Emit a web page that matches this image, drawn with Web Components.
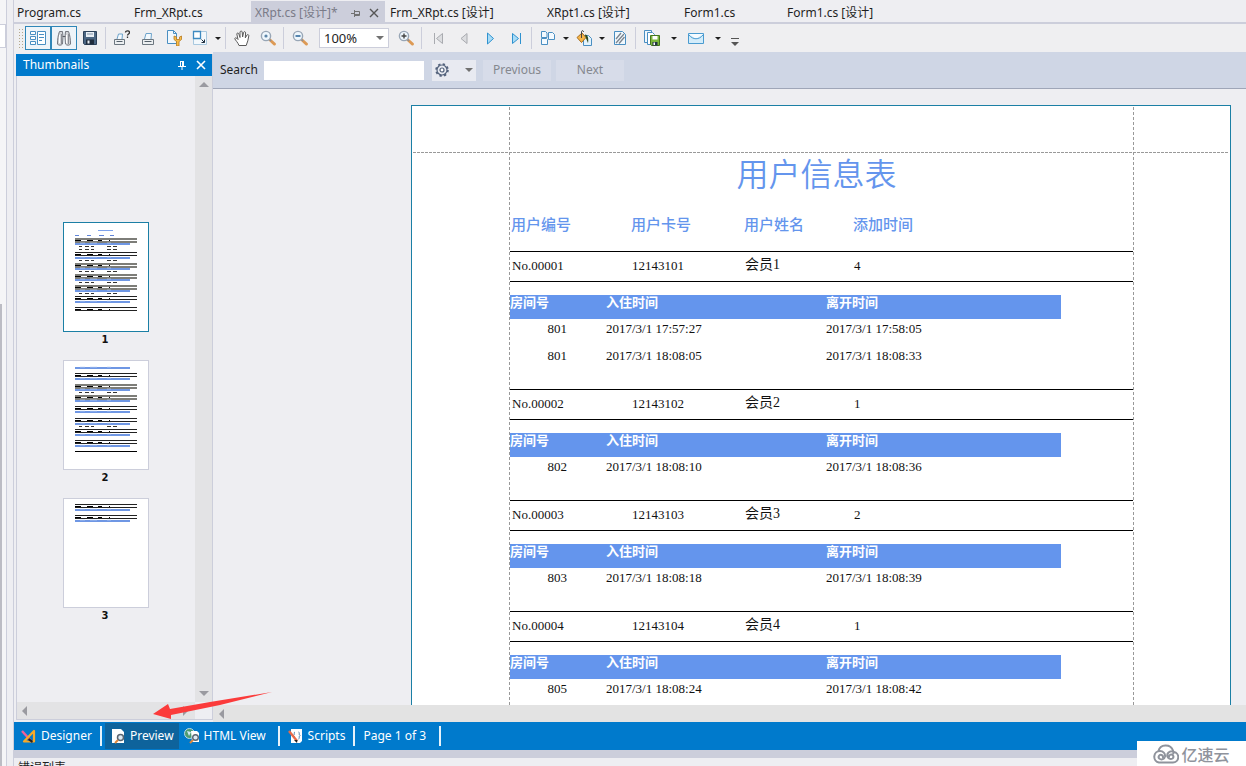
<!DOCTYPE html>
<html lang="zh-CN">
<head>
<meta charset="utf-8">
<title>XRpt.cs - Preview</title>
<style>
html, body { margin: 0; height: 100%; }
body { font: 12px/16px "Noto Sans", "Noto Sans CJK SC", sans-serif; color: #1e1e1e; background: #eeeef2; overflow: hidden; }
</style>
</head>
<body>
<ide-shell>
  <doc-tabs slot="tabs"></doc-tabs>
  <report-toolbar slot="toolbar"></report-toolbar>
  <thumb-panel slot="side">
    <page-thumb number="1" selected></page-thumb>
    <page-thumb number="2"></page-thumb>
    <page-thumb number="3"></page-thumb>
  </thumb-panel>
  <search-bar slot="search"></search-bar>
  <report-page slot="page">
    <member-group no="No.00001" card="12143101" name="会员1" count="4" rooms="801,2017/3/1 17:57:27,2017/3/1 17:58:05;801,2017/3/1 18:08:05,2017/3/1 18:08:33"></member-group>
    <member-group no="No.00002" card="12143102" name="会员2" count="1" rooms="802,2017/3/1 18:08:10,2017/3/1 18:08:36"></member-group>
    <member-group no="No.00003" card="12143103" name="会员3" count="2" rooms="803,2017/3/1 18:08:18,2017/3/1 18:08:39"></member-group>
    <member-group no="No.00004" card="12143104" name="会员4" count="1" rooms="805,2017/3/1 18:08:24,2017/3/1 18:08:42"></member-group>
  </report-page>
  <status-bar slot="status"></status-bar>
  <span slot="output">错误列表</span>
</ide-shell>

<script>
const define = (name, html) => customElements.define(name, class extends HTMLElement {
  connectedCallback() {
    if (this.shadowRoot) return;
    const root = this.attachShadow({ mode: 'open' });
    const t = document.createElement('template');
    t.innerHTML = typeof html === 'function' ? html(this) : html;
    root.append(t.content.cloneNode(true));
  }
});

/* 16x16 icon set */
const lens = (x, y) => `<path d="M${x + 3.5} ${y + 3.5}l5 4.6" stroke="#dd9a55" stroke-width="2.8" stroke-linecap="round"/><path d="M${x + 3} ${y + 3}l2 2" stroke="#8a8f98" stroke-width="1.6"/><circle cx="${x}" cy="${y}" r="4.6" fill="#eef6fc" stroke="#98a6b6" stroke-width="1.4"/>`;
const ICONS = {
  thumbs: '<g fill="#fff" stroke="#4a8fc2"><path d="M.5 1.500h5v3h-5zM.5 6.500h5v3h-5zM.5 11.500h5v3h-5zM7.500 1.500h8v13h-8z"/></g><path d="M9 4.500h5M9 7.500h5M9 10.500h3" stroke="#4a8fc2"/>',
  find: '<g fill="#d3d5d9" stroke="#74777f"><path d="M3.500 1.500h3l.5 5-.5 7.500c-1 1.600-4.500 1.600-5 0 0-4 .5-9 2-12.500zM12.500 1.500h-3l-.5 5 .5 7.500c1 1.600 4.500 1.600 5 0 0-4-.5-9-2-12.500z"/></g><path d="M3.500 5v8M10.500 5v8" stroke="#fff"/><path d="M5.500 4v10M12.500 4v10" stroke="#8b8e95"/><path d="M6.500 6.500h3" stroke="#5b5e66"/>',
  save: '<path d="M1.500 1.500h13v13h-12l-1-1z" fill="#4a6582" stroke="#2c4159"/><path d="M4 2h8v5H4z" fill="#e8eef4"/><path d="M5 4h6" stroke="#8294a8"/><path d="M4 9.500h8v5H4z" fill="#1f2c3c"/><path d="M5.500 10.500h2v3h-2z" fill="#e8eef4"/>',
  printq: '<path d="M3 9l1.500-5h4L8 9" fill="#f3f9fd" stroke="#6da3cb"/><path d="M.5 9.500h10v5H.5z" fill="#eceff1" stroke="#6c7780"/><path d="M2.500 11.500h6" stroke="#55606a"/><path d="M11.500 2.500c0-2.300 4-2.300 4 0 0 1.500-2 1.400-2 3M13.500 6.500v1.500" stroke="#333" stroke-width="1.300" fill="none"/>',
  print: '<path d="M4.500 9L6 3.500h5.500L11 9" fill="#f3f9fd" stroke="#6da3cb"/><path d="M2.500 9.500h11v5h-11z" fill="#eceff1" stroke="#6c7780"/><path d="M4.500 11.500h7" stroke="#55606a"/>',
  setup: '<path d="M1.500 .5h6l3 3v10h-9z" fill="#f1f8fd" stroke="#4a8fc2"/><path d="M7.500 .5v3h3" fill="none" stroke="#4a8fc2"/><path d="M8 6v3.500l2.500 2V16h2.500v-4.500l2.500-2V6l-2 1v2.500h-3V7z" fill="#f7bd48" stroke="#b87a20" stroke-width=".8"/>',
  scale: '<path d="M1.500 1.500h13v13h-13z" fill="#f2f8fc" stroke="#a8c8df"/><path d="M1.500 1.500h7v7h-7z" fill="#fff" stroke="#3f8ac0" stroke-width="1.300"/><path d="M9.500 9.500l3 3M12.500 9.500v3h-3" stroke="#1f2f40" fill="none"/>',
  hand: '<path d="M5 15.500C4 12.500 1.500 10.500.7 8.500c.6-1.200 2-.6 3.300 1L2.800 4c.3-1.500 1.700-1.300 2.100.2L6 7.500 6 2c.4-1.300 1.900-1.300 2.200 0l.4 5 1-4.600c.6-1.300 2-.8 2 .5l-.3 5L13 5c.8-.9 2-.3 1.800.9-.5 3.300-1.300 6.600-2.600 9.600z" fill="#fff" stroke="#5a5a5a"/>',
  lens: lens(6, 6) + '<circle cx="6" cy="6" r="1.600" fill="#5b84a8"/>',
  zoomout: lens(6, 6) + '<path d="M3.500 6h5" stroke="#235f96" stroke-width="1.500"/>',
  zoomin: lens(6, 6) + '<path d="M3.500 6h5M6 3.500v5" stroke="#444" stroke-width="1.400"/>',
  first: '<path d="M4.500 3v11" stroke="#a9abb0"/><path d="M12.500 3.500v10l-6-5z" fill="#dcdde0" stroke="#a9abb0"/>',
  prev: '<path d="M11 3.500v10l-6-5z" fill="#dcdde0" stroke="#a9abb0"/>',
  next: '<path d="M5.500 3v11l6-5.500z" fill="#a9dcf7" stroke="#2f92cf"/>',
  last: '<path d="M12.500 3v11" stroke="#2f92cf"/><path d="M4.500 3.500v10l6-5z" fill="#a9dcf7" stroke="#2f92cf"/>',
  multi: '<g fill="#f4faff" stroke="#4a8fc2"><path d="M1.500 1.500h4l1.500 1.500v4.500h-5.500zM8.500 2.500h4l2 2v5h-6zM1.500 8.500h5l1 1v5h-6z"/></g>',
  fill: '<path d="M7.500 5.500h5l3 3v7h-8z" fill="#e4f3fc" stroke="#4a8fc2"/><path d="M1 7.500L6 3l4 4.500-4.500 5z" fill="#f6b548" stroke="#a86e1e"/><path d="M5.500 8V1.500c.5-1.500 2-1 2 .5" fill="none" stroke="#444"/><path d="M9 4.500c3.500.5 3.500 5 3 8.500l-2.500-6z" fill="#2c4a1e"/>',
  mark: '<path d="M2.500 1.500h8l3 3v10h-11z" fill="#f1f8fd" stroke="#4a8fc2"/><path d="M4 9l5-6M4 13l8-9M7 13.500l5.500-6.500" stroke="#7b848e" stroke-width="1.300"/>',
  export: '<path d="M.5 .5h7v12h-7z" fill="#f1f8fd" stroke="#4a8fc2"/><path d="M3.500 2.500h5l2 2v10h-7z" fill="#fff" stroke="#4a8fc2"/><path d="M6.500 5.500h9v10h-8l-1-1z" fill="#7cb83c" stroke="#45761c"/><path d="M8.500 6h5v3.500h-5z" fill="#fff"/><path d="M8.500 12h5v3.500h-5z" fill="#234"/><path d="M9.500 12.500h1.500v2.500H9.500z" fill="#fff"/>',
  mail: '<path d="M.5 3.500h15v10H.5z" fill="#d3ecfa" stroke="#4a9bd0"/><path d="M1 4l7 5 7-5z" fill="#f6fbff"/><path d="M1 5c4 5 10 5 14 0" fill="none" stroke="#4a9bd0"/>',
  gear: '<circle cx="8" cy="8" r="5.800" fill="none" stroke="#53627c" stroke-width="2" stroke-dasharray="2.300 2.255"/><circle cx="8" cy="8" r="5" fill="#e8ebf2" stroke="#53627c" stroke-width="1.200"/><circle cx="8" cy="8" r="2" fill="#fff" stroke="#53627c" stroke-width="1.200"/>',
  designer: '<path d="M1 3l10 11" stroke="#f0609a" stroke-width="2.400"/><path d="M3 13.500L13 3v10.500z" fill="none" stroke="#f7a928" stroke-width="2.200" stroke-linejoin="round"/><path d="M7 12l4 3 1-2-4-3z" fill="#222"/>',
  preview: '<path d="M2 1h9l3 3v11H2z" fill="#fff"/><circle cx="10.500" cy="9.500" r="3" fill="#dfeaf3" stroke="#5a6470" stroke-width="1.500"/><path d="M8 12l-3 3" stroke="#e0873c" stroke-width="2"/>',
  html: '<circle cx="5.500" cy="5.500" r="5" fill="#4d9b70" stroke="#b9d7ea"/><path d="M3 3l4 1-2 4z" fill="#cfe9f7"/><path d="M7 3h6l2 2v9H8z" fill="#fff"/><circle cx="11.500" cy="9.500" r="2.800" fill="#dfeaf3" stroke="#5a6470" stroke-width="1.400"/><path d="M9 12l-3 3" stroke="#e0873c" stroke-width="2"/>',
  scripts: '<path d="M3 1h11v12l-2 2H3z" fill="#fff"/><path d="M7 4c-1.500 0 0 3-1.500 3.500C7 8 5.500 11 7 11M10.500 4c1.500 0 0 3 1.500 3.500-1.500.5 0 3.500-1.500 3.500" fill="none" stroke="#4d7fa8"/><path d="M1 3l8 10" stroke="#e76a4a" stroke-width="2.400"/><path d="M6 12l3 3 .5-3z" fill="#222"/>'
};
define('tool-icon', el => `<style>:host{display:block;width:16px;height:16px;flex:none}svg{display:block}</style>
<svg width="16" height="16" viewBox="0 0 16 16" fill="none" aria-hidden="true">${ICONS[el.getAttribute('name')]}</svg>`);

define('drop-arrow', `<style>:host{display:block;width:0;height:0;flex:none;border:var(--arrow-size,3px) solid transparent;border-top-color:var(--arrow,#1e1e1e);border-bottom-width:0}</style>`);

define('tool-button', el => `<style>
:host{display:block;flex:none}
button{display:flex;align-items:center;justify-content:center;width:var(--w,26px);height:24px;padding:0;border:1px solid transparent;background:none}
:host([pressed]) button{border-color:#2f86b8;background:#eef4f9}
</style><button type="button" aria-label="${el.getAttribute('label')}"><slot></slot></button>`);

const btn = (icon, label, attr = '') => `<tool-button label="${label}" ${attr}><tool-icon name="${icon}"></tool-icon></tool-button>`;
const drop = (label, cls) => `<tool-button class="${cls}" label="${label}"><drop-arrow></drop-arrow></tool-button>`;

define('report-toolbar', `<style>
:host{display:flex;align-items:center;box-sizing:border-box;height:28px;padding-left:2px;background:#efeff1}
.grip{width:5px;height:20px;margin:0 2px;background:radial-gradient(circle,#b5a98c 25%,transparent 35%) 0 0/3px 3px}
i{width:1px;height:22px;margin:0 3px 0 2px;background:#cccedb}
.d10{--w:10px}.d12{--w:12px}.d18{--w:18px}.n{--w:22px}
.zoom{position:relative;margin:0 4px 0 6px}
select{display:block;appearance:none;width:70px;height:20px;padding:0 4px;border:1px solid #cccedb;border-radius:0;background:#fff;color:#1e1e1e;font:13px/18px "Noto Sans",sans-serif}
.zoom drop-arrow{position:absolute;right:5px;top:8px;pointer-events:none;--arrow:#717171;--arrow-size:4px}
.more{width:8px;margin:8px 0 0 4px;padding-top:3px;border-top:1px solid #555;--arrow:#555;--arrow-size:4px}
</style>
<span class="grip"></span>
${btn('thumbs', 'Thumbnails', 'pressed')}${btn('find', 'Search', 'pressed')}${btn('save', 'Save')}<i></i>
${btn('printq', 'Print')}${btn('print', 'Quick Print')}${btn('setup', 'Page Setup')}${btn('scale', 'Scale')}${drop('Scale options', 'd10')}<i></i>
${btn('hand', 'Hand Tool')}${btn('lens', 'Magnifier')}<i></i>${btn('zoomout', 'Zoom Out')}
<span class="zoom"><select aria-label="Zoom"><option>100%</option></select><drop-arrow></drop-arrow></span>
${btn('zoomin', 'Zoom In')}<i></i>
${btn('first', 'First Page')}${btn('prev', 'Previous Page')}${btn('next', 'Next Page')}${btn('last', 'Last Page')}<i></i>
${btn('multi', 'Multiple Pages')}${drop('Multiple page options', 'd10')}${btn('fill', 'Background Color')}${drop('Colors', 'd10')}${btn('mark', 'Watermark')}<i></i>
${btn('export', 'Export')}${drop('Export options', 'd18')}${btn('mail', 'E-Mail')}${drop('E-Mail options', 'd18')}
<span class="more"><drop-arrow></drop-arrow></span>`);

define('doc-tabs', `<style>
:host{display:grid;grid-template-columns:117px 120px 136px 157px 137px 103px auto;box-sizing:border-box;height:24px;padding-top:1px;border-bottom:2px solid #cccedb;justify-content:start}
button{display:flex;align-items:center;padding:3px 3px 0;border:0;background:none;font:inherit;color:inherit;white-space:nowrap}
.on{margin-right:2px;padding-left:4px;background:#cccedb;color:#7a7b88}
.pin{margin-left:auto}.x{margin:0 3px 0 8px}
</style>
<button>Program.cs</button><button>Frm_XRpt.cs</button>
<button class="on">XRpt.cs [设计]*
<svg class="pin" width="10" height="10" fill="none" stroke="#717171"><path d="M0 5.500h3M3.500 2v7M3.500 3.500h5v4h-5M3.500 6.500h5"/></svg>
<svg class="x" width="10" height="10" stroke="#555" stroke-width="1.400"><path d="M1 1l8 8M9 1L1 9"/></svg></button>
<button>Frm_XRpt.cs [设计]</button><button>XRpt1.cs [设计]</button><button>Form1.cs</button><button>Form1.cs [设计]</button>`);

define('search-bar', `<style>
:host{display:flex;align-items:center;height:36px;padding-left:7px;background:#cfd6e5;border-bottom:1px solid #9fa6b8;--arrow:#717171;--arrow-size:4px}
label{width:44px;font-size:12px}
input{box-sizing:border-box;width:160px;height:19px;margin-right:8px;padding:0 4px;border:0;background:#fff;font:inherit}
button{height:21px;width:68px;margin-right:5px;padding:0;border:0;background:#d7dce9;color:#85888f;font:inherit}
.opt{display:flex;align-items:center;justify-content:space-between;box-sizing:border-box;width:44px;margin-right:7px;padding:0 3px 0 2px;background:#e8eaf1}
</style>
<label for="q">Search</label><input id="q" type="text">
<button class="opt" aria-label="Search options"><tool-icon name="gear"></tool-icon><drop-arrow></drop-arrow></button>
<button>Previous</button><button>Next</button>`);

define('thumb-panel', `<style>
:host{display:grid;grid-template:22px 1fr 17px / 1fr 17px;box-sizing:border-box;width:197px;margin:2px 0 2px 2px;border:1px solid #cccedb;border-top:0}
header{grid-column:1/3;display:flex;align-items:center;margin-left:-1px;padding:0 6px 0 7px;background:#007acc;color:#fff}
h2{flex:1;margin:0;font:inherit}
svg{display:block}.x{margin-left:9px}
.list{display:flex;flex-direction:column;align-items:center;gap:12px;padding-top:146px;min-height:0;overflow:hidden}
.v{display:flex;flex-direction:column;align-items:center;justify-content:space-between;padding:5px 0;background:#e3e3e5}
.h{display:flex;align-items:center;justify-content:space-between;padding:0 6px 0 4px;background:#e3e3e5}
</style>
<header><h2>Thumbnails</h2>
<svg width="10" height="10" fill="none" stroke="#fff"><path d="M3.500 1v5M6.500 1v5M5.500 1v5M3 1.500h4M1 6.500h8M5 7v3"/></svg>
<svg class="x" width="10" height="10" stroke="#fff" stroke-width="1.600"><path d="M1 1l8 8M9 1L1 9"/></svg></header>
<div class="list"><slot></slot></div>
<div class="v"><svg width="10" height="6" fill="#9a9aa0"><path d="M0 6l5-5 5 5z"/></svg><svg width="10" height="6" fill="#9a9aa0"><path d="M0 0l5 5 5-5z"/></svg></div>
<div class="h"><svg width="6" height="10" fill="#9a9aa0"><path d="M6 0L1 5l5 5z"/></svg><svg width="6" height="10" fill="#9a9aa0"><path d="M0 0l5 5-5 5z"/></svg></div>`);

/* miniature page content: [top of group, extra detail rows, line colour] */
const MINI = {
  1: { head: 1, g: [[16, 2, 1], [30, 1], [41, 1, 1], [52, 1, 1], [63, 2, 1], [74, 0], [85, -1]] },
  2: { band: 7, g: [[13, 0], [24, 1, 1], [35, 0, 1], [46, 0], [58, 1], [69, 0], [80, 0]], end: 91 },
  3: { g: [[6, 0], [17, 0]] }
};
function mini(n) {
  const m = MINI[n], dash = (y, x, c = '#222') => `<path d="${x}" transform="translate(0 ${y})" stroke="${c}"/>`;
  const band = y => `<path d="M12 ${y}h55" stroke="#6f97e4" stroke-width="2"/><path d="M17 ${y - 1}h5M27 ${y - 1}h7M44 ${y - 1}h4" stroke="#c5d6f7" stroke-width=".6"/>`;
  let s = '';
  if (m.head) s += dash(8.5, 'M35 0h15', '#7ea2ec') + dash(13.5, 'M12 0h4M24 0h4M36 0h5M47 0h4', '#5f84d8');
  if (m.band) s += band(m.band + 1);
  for (const [y, r, soft] of m.g) {
    s += soft ? `<path d="M12 ${y + 1}h62M12 ${y + 4}h62" stroke="#7d7d78" stroke-width="2"/>` : `<path d="M12 ${y + .5}h62M12 ${y + 3.5}h62" stroke="#222"/>`;
    s += dash(y + 2.5, 'M12 0h6M24 0h6M35 0h4M46 0h1', '#000');
    if (r >= 0) s += band(y + 6);
    for (let i = 0; i < r; i++) s += dash(y + 8.5 + i * 3, 'M16 0h3M22 0h4M28 0h3M44 0h4M50 0h4', '#333');
  }
  if (m.end) s += `<path d="M12 ${m.end + .5}h62" stroke="#000"/>`;
  return s;
}
define('page-thumb', el => `<style>
:host{display:block;text-align:center}
svg{display:block;box-sizing:border-box;width:86px;height:110px;border:1px solid #cccedb;background:#fff}
:host([selected]) svg{border-color:#1b7fa5}
span{display:block;padding-right:2px;font:bold 10px/16px "DejaVu Sans",sans-serif;color:#111}
</style><svg viewBox="1 1 84 108" fill="none" aria-hidden="true">${mini(el.getAttribute('number'))}</svg><span>${el.getAttribute('number')}</span>`);

define('report-page', `<style>
:host{display:block;box-sizing:border-box;width:820px;height:1100px;flex:none;border:1px solid #1b7fa5;padding:47px 97px 0 98px;
--v:repeating-linear-gradient(#999 0 3px,transparent 3px 5px);
background:var(--v) 97px 1px/1px 100% no-repeat,var(--v) 721px 1px/1px 100% no-repeat,repeating-linear-gradient(90deg,#999 0 3px,transparent 3px 4px) 1px 46px/calc(100% - 3px) 1px no-repeat,#fff}
h1{margin:0;padding:0 10px 6px 0;font:350 32px/39px "Noto Sans CJK SC",sans-serif;color:#6495ed;text-align:center}
table{border-collapse:collapse;table-layout:fixed;width:100%}
th{height:52px;padding:0 0 1px 1px;text-align:left;font:500 15px/20px "Noto Sans CJK SC",sans-serif;color:#6495ed}
</style><h1>用户信息表</h1>
<table><colgroup><col style="width:120px"><col style="width:113px"><col style="width:109px"><col></colgroup>
<tr><th>用户编号</th><th>用户卡号</th><th>用户姓名</th><th>添加时间</th></tr></table>
<slot></slot>`);

define('member-group', el => {
  const a = n => el.getAttribute(n);
  const rows = a('rooms').split(';').map(r => { const [x, y, z] = r.split(','); return `<tr><td class="num">${x}</td><td>${y}</td><td>${z}</td></tr>`; }).join('');
  return `<style>
:host{display:block;padding-bottom:16px;font:13px/20px "Liberation Serif",serif;color:#111}
table{border-collapse:collapse;table-layout:fixed}
td,th{padding:0;text-align:left}
.member{display:grid;grid-template-columns:120px 113px 109px 1fr;height:29px;margin-bottom:13px;border:solid #000;border-width:1px 0;line-height:27px}
.member span{padding-left:2px}
.member .name{font:14px/26px "Liberation Serif","Noto Sans CJK SC",serif}
table{width:551px}
th{height:24px;vertical-align:top;font:bold 13px/14px "Noto Sans CJK SC",sans-serif;color:#fff}
thead{background:#6495ed}
td{height:27px;vertical-align:top}
.num{text-align:right;padding-right:39px}
</style>
<div class="member"><span>${a('no')}</span><span>${a('card')}</span><span class="name">${a('name')}</span><span>${a('count')}</span></div>
<table><colgroup><col style="width:96px"><col style="width:220px"><col></colgroup>
<thead><tr><th>房间号</th><th>入住时间</th><th>离开时间</th></tr></thead><tbody>${rows}</tbody></table>`;
});

define('status-bar', `<style>
:host{display:flex;align-items:center;height:28px;padding-left:2px;background:#007acc;color:#fff}
button{display:flex;align-items:center;gap:4px;height:26px;padding:0 5px;border:0;background:none;color:inherit;font:inherit;white-space:nowrap}
.on{background:#0e639c}
.html{width:96px}
i{width:2px;height:20px;margin:0 3px;background:#e6f2fa}
span{box-sizing:border-box;width:78px;padding:0 5px}
</style>
<button><tool-icon name="designer"></tool-icon>Designer</button><i></i>
<button class="on"><tool-icon name="preview"></tool-icon>Preview</button>
<button class="html"><tool-icon name="html"></tool-icon>HTML View</button><i></i>
<button><tool-icon name="scripts"></tool-icon>Scripts</button><i></i>
<span>Page 1 of 3</span><i></i>`);

define('ide-shell', `<style>
:host{display:grid;grid-template-columns:14px minmax(0,1fr);height:100vh;overflow:hidden;position:relative}
.edge{display:flex;box-sizing:border-box;border-right:1px solid #cccedb}
.strip{position:relative;width:6px;border-right:1px solid #cccedb;background:#f5f5f7}
.combo{position:absolute;top:24px;left:-8px;width:12px;height:22px;border:1px solid #cccedb;background:#fff}
.grab{position:absolute;top:304px;left:0;bottom:0;width:2px;background:#bcbcc4}
.main{display:grid;grid-template-rows:auto auto minmax(0,1fr) auto auto auto;height:100vh}
.work{display:grid;grid-template-columns:auto minmax(0,1fr);min-height:0}
.view{display:grid;grid-template-rows:auto minmax(0,1fr) 17px;min-height:0}
.canvas{display:flex;justify-content:flex-end;padding:16px 15px 0 0;overflow:hidden}
.h{display:flex;align-items:center;padding-left:5px;background:#e3e3e3}
.split{height:8px;background:#cccedb}
.out{box-sizing:border-box;height:8px;padding:2px 4px 0;overflow:hidden}
.out ::slotted(span){display:block;line-height:16px}
.arrow{position:absolute;left:150px;top:688px}
.brand{position:absolute;right:0;bottom:0;display:flex;align-items:center;justify-content:center;gap:2px;width:109px;height:25px;background:#fff;color:#8f939c;font:500 16px/24px "Noto Sans CJK SC",sans-serif}
</style>
<div class="edge"><div class="strip"><span class="combo"></span><span class="grab"></span></div></div>
<div class="main">
<slot name="tabs"></slot><slot name="toolbar"></slot>
<div class="work"><slot name="side"></slot>
<div class="view"><slot name="search"></slot><div class="canvas"><slot name="page"></slot></div>
<div class="h"><svg width="6" height="10" fill="#9a9aa0"><path d="M6 0L1 5l5 5z"/></svg></div></div></div>
<slot name="status"></slot><div class="split"></div><div class="out"><slot name="output"></slot></div>
</div>
<svg class="arrow" width="124" height="34" fill="#fb3b3b" aria-hidden="true"><path d="M3 26L18 16l2 5L60 14 122 4 70 17 21 27l0 4z"/></svg>
<div class="brand"><svg width="26" height="20" viewBox="0 0 26 20" fill="none" stroke="#8f939c" stroke-width="2" stroke-linecap="round"><path d="M10 13.500a2.200 2.200 0 1 0-3.500 1.300c2 1.400 5 .2 5.500-2.300.5-3-2-5.500-5-5.500a5.800 5.800 0 0 0-1 11.500h14a5.300 5.300 0 0 0 1-10.500M5.500 7C7 0 17.500-.5 20 6.500c.4 1.300.5 2 .3 3M16 13a2.200 2.200 0 1 1 3.500 1.500c-2 1.200-4.700 0-5.200-2.200-.5-2.800 1.700-5 4.500-5"/></svg>亿速云</div>`);
</script>
</body>
</html>
